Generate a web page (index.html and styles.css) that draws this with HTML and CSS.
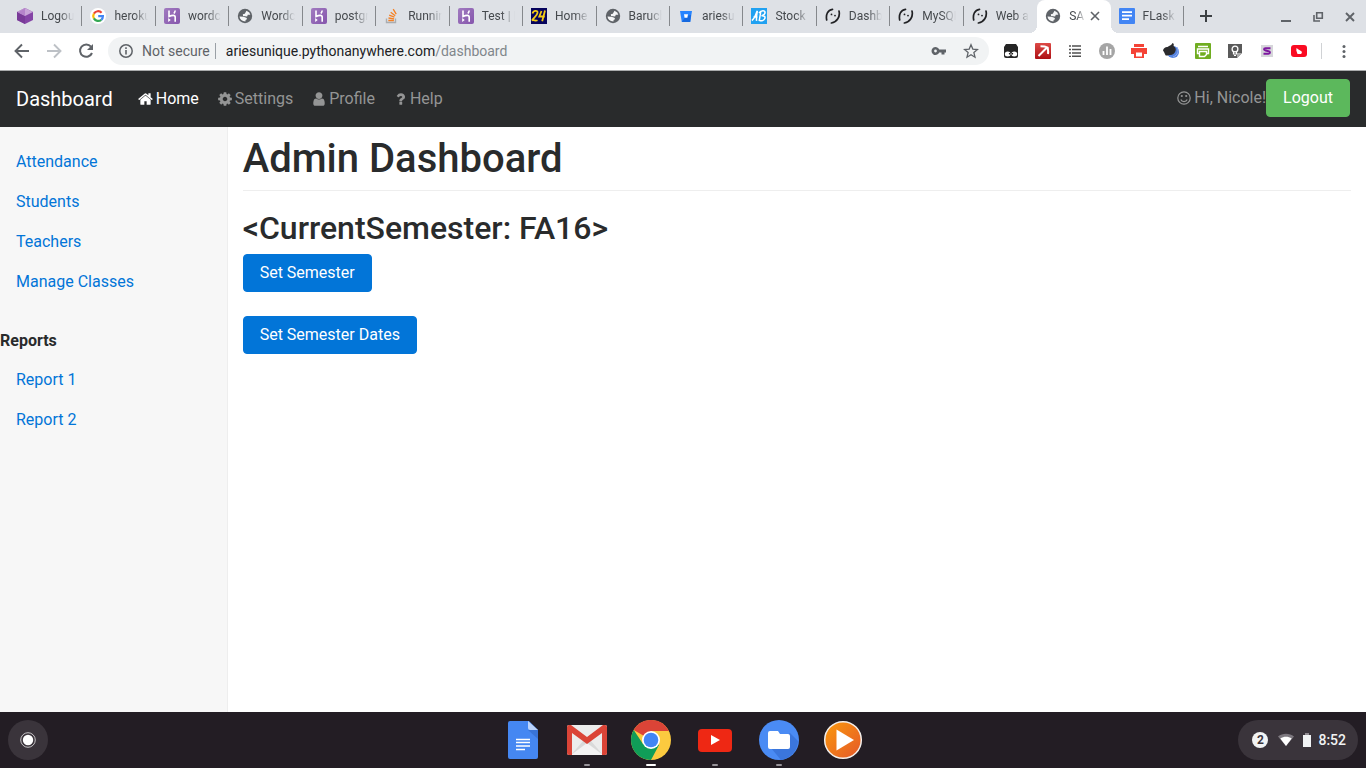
FILE: index.html
```html
<!DOCTYPE html>
<html lang="en">
<head>
<meta charset="utf-8">
<meta name="viewport" content="width=device-width, initial-scale=1">
<title>Admin Dashboard</title>
<link rel="stylesheet" href="styles.css">
</head>
<body>
<svg class="sprite" aria-hidden="true">
  <defs>
    <linearGradient id="heroku-fill" x1="0" y1="0" x2="1" y2="1"><stop offset="0" stop-color="#a17bc0"/><stop offset="1" stop-color="#8555ac"/></linearGradient>
    <linearGradient id="play-fill" x1="0" y1="0" x2="1" y2="1"><stop offset="0" stop-color="#fb9a0c"/><stop offset="1" stop-color="#e4572a"/></linearGradient>
    <linearGradient id="pick-fill" x1="0" y1="0" x2="0" y2="1"><stop offset="0" stop-color="#dd4a46"/><stop offset="1" stop-color="#ad1015"/></linearGradient>
  </defs>
  <symbol id="globe" viewBox="0 0 16 16"><circle cx="8" cy="8" r="7.200" fill="#5f6368"/><path d="M9.500 2.700L12.300 4.500l1 2.300-2.500-.1-.7 1.700-4-.5-.3-1.600 2-.5zM2.500 8.600l4 .2 2.800.9.900 1.300-1.600 1-.2 1.500C5 13.400 2.800 11.500 2.500 8.600z" fill="#f4f5f6"/></symbol>
  <symbol id="heroku" viewBox="0 0 16 16"><rect width="16" height="16" rx="2" fill="url(#heroku-fill)"/><path d="M5 2.500v6c1.500-.7 3-1.100 4.300-1.100 1.500 0 1.900.7 1.900 1.800v4.500M11.200 2.500c-.1 1-.5 2-1.300 3" fill="none" stroke="#fff" stroke-width="1.600"/><path d="M4.200 10l2.500 2-2.500 2z" fill="#fff"/></symbol>
  <symbol id="whiskers" viewBox="0 0 16 16"><path d="M7.500 1.300C2.700 2 .6 6.500 1.700 12M14 3c1.400 5.600-2 11-7.600 12" fill="none" stroke="#202124" stroke-width="1.700" stroke-linecap="round"/><circle cx="6.500" cy="6.400" r=".9" fill="#202124"/><circle cx="10" cy="7.600" r=".9" fill="#202124"/></symbol>
  <symbol id="doc" viewBox="0 0 16 16"><rect width="16" height="16" rx="1" fill="#4285f4"/><path d="M3 4.200h10M3 7.700h10M3 11.200h7" stroke="#fff" stroke-width="1.700"/></symbol>
</svg>

<header class="browser">
  <div class="tabstrip">
    <div class="tabs" role="tablist" aria-label="Open tabs">
      <button class="tab" role="tab"><svg class="favicon" viewBox="0 0 16 16"><path d="M8 0l8 4v8l-8 4-8-4V4z" fill="#8544a6"/><path d="M8 0l8 4-8 4-8-4z" fill="#c9a4d8"/><path d="M0 4l8 4v8l-8-4z" fill="#793a98"/><path d="M8 0v8L1 4.500z" fill="#b583ca"/></svg><span class="tab-title">Logou</span></button>
      <button class="tab" role="tab"><svg class="favicon" viewBox="0 0 16 16"><circle cx="8" cy="8" r="8" fill="#fff"/><g fill="none" stroke-width="2.200"><path d="M3.900 5.600A4.900 4.900 0 0 1 11.600 4.700" stroke="#ea4335"/><path d="M3.900 5.600a4.900 4.900 0 0 0 0 4.900" stroke="#fbbc05"/><path d="M3.900 10.400a4.900 4.900 0 0 0 7.400 1.400" stroke="#34a853"/><path d="M11.300 11.800c1-.8 1.600-2.100 1.600-3.600H8.200" stroke="#4285f4"/></g></svg><span class="tab-title">heroku</span></button>
      <button class="tab" role="tab"><svg class="favicon"><use href="#heroku"/></svg><span class="tab-title">wordc</span></button>
      <button class="tab" role="tab"><svg class="favicon"><use href="#globe"/></svg><span class="tab-title">Wordc</span></button>
      <button class="tab" role="tab"><svg class="favicon"><use href="#heroku"/></svg><span class="tab-title">postgr</span></button>
      <button class="tab" role="tab"><svg class="favicon" viewBox="0 0 16 16"><path d="M2.500 10.500v4h9v-4" fill="none" stroke="#aaadb0" stroke-width="1.400"/><path d="M4.300 12.500h5.600M4.500 10l5.600.9M5.200 7.200l5.200 2M6.700 4.300l4.500 3.500M9.200 1.200l3 5" stroke="#f48024" stroke-width="1.300"/></svg><span class="tab-title">Runnin</span></button>
      <button class="tab" role="tab"><svg class="favicon"><use href="#heroku"/></svg><span class="tab-title">Test | H</span></button>
      <button class="tab" role="tab"><svg class="favicon" viewBox="0 0 16 16"><path d="M0 0h16v16H0z" fill="#06035c"/><path d="M1.500 5.500c.8-3.300 5.500-3.500 5-.7C6.100 7.500 3.200 9.500 1 12.500c1.700-1 3.500.8 5.500-.3M10.500 3L8.300 8.500h5.500M14 2.500l-2.800 10.700" fill="none" stroke="#f3cb16" stroke-width="1.800"/></svg><span class="tab-title">Home</span></button>
      <button class="tab" role="tab"><svg class="favicon"><use href="#globe"/></svg><span class="tab-title">Baruch</span></button>
      <button class="tab" role="tab"><svg class="favicon" viewBox="0 0 16 16"><path d="M2 3h12l-1.800 11H3.800z" fill="#2684ff"/><path d="M8 8l5-1-.8 7H3.800z" fill="#1669df"/><path d="M6 6.300h4l-.6 3.500H6.600z" fill="#fff"/></svg><span class="tab-title">ariesu</span></button>
      <button class="tab" role="tab"><svg class="favicon" viewBox="0 0 16 16"><path d="M0 0h16v16H0z" fill="#20a1f1"/><path d="M.8 12.500c3-1.500 4-7 5.500-9.500-.5 3-1.200 7-.7 9.800M2.500 9h4M9.800 3.500L8.200 13M8 5c2-3 6.500-3 6 0-.4 2-2 2.300-3.500 2.700 3-.2 4 1 3.300 2.800-.8 2-3.500 3-5.300 1.800" fill="none" stroke="#fff" stroke-width="1.500"/></svg><span class="tab-title">Stock</span></button>
      <button class="tab" role="tab"><svg class="favicon"><use href="#whiskers"/></svg><span class="tab-title">Dashb</span></button>
      <button class="tab" role="tab"><svg class="favicon"><use href="#whiskers"/></svg><span class="tab-title">MySQL</span></button>
      <button class="tab tab-before-active" role="tab"><svg class="favicon"><use href="#whiskers"/></svg><span class="tab-title">Web a</span></button>
      <button class="tab tab-active" role="tab" aria-selected="true"><svg class="favicon"><use href="#globe"/></svg><span class="tab-title">SA</span><svg class="tab-close" viewBox="0 0 10 10"><path d="M1 1l8 8M9 1L1 9" stroke="#5f6368" stroke-width="1.600"/></svg></button>
      <button class="tab" role="tab"><svg class="favicon"><use href="#doc"/></svg><span class="tab-title">FLask</span></button>
    </div>
    <button class="new-tab" aria-label="New tab"><svg width="12" height="12" viewBox="0 0 12 12"><path d="M6 0v12M0 6h12" stroke="#3c4043" stroke-width="2"/></svg></button>
    <div class="window-controls">
      <button aria-label="Minimize"><svg width="12" height="12" viewBox="0 0 12 12"><path d="M1 10h10" stroke="#5f6368" stroke-width="2"/></svg></button>
      <button aria-label="Restore"><svg width="12" height="12" viewBox="0 0 12 12"><path d="M4.700 1.700h5.600v5.600H4.700zM2 4v6h6" fill="none" stroke="#5f6368" stroke-width="1.600"/></svg></button>
      <button aria-label="Close"><svg width="12" height="12" viewBox="0 0 12 12"><path d="M2 2l8 8M10 2l-8 8" stroke="#5f6368" stroke-width="1.900"/></svg></button>
    </div>
  </div>

  <div class="toolbar">
    <div class="history">
      <button aria-label="Back"><svg width="16" height="16" viewBox="0 0 16 16"><path d="M15 8H2M8 1.500L1.500 8 8 14.500" fill="none" stroke="#5f6368" stroke-width="1.900"/></svg></button>
      <button aria-label="Forward"><svg width="16" height="16" viewBox="0 0 16 16"><path d="M1 8h13M8 1.500L14.500 8 8 14.500" fill="none" stroke="#bdc1c6" stroke-width="1.900"/></svg></button>
      <button aria-label="Reload"><svg width="16" height="16" viewBox="0 0 16 16"><path d="M13 3.600A6.200 6.200 0 1 0 14 10" fill="none" stroke="#5f6368" stroke-width="2"/><path d="M15 1v6H9z" fill="#5f6368"/></svg></button>
    </div>
    <div class="address-bar">
      <svg width="14" height="14" viewBox="0 0 14 14"><circle cx="7" cy="7" r="6.200" fill="none" stroke="#5f6368" stroke-width="1.500"/><path d="M7 6v4.500M7 3.300v1.600" stroke="#5f6368" stroke-width="1.600"/></svg>
      <span class="security">Not secure</span>
      <div class="url" role="textbox" aria-label="Address" contenteditable="true" spellcheck="false">ariesunique.pythonanywhere.com<span class="url-path">/dashboard</span></div>
      <button aria-label="Saved passwords"><svg width="16" height="16" viewBox="0 0 16 16"><path d="M8.200 6.500H15v3h-1.500v2h-3v-2H8.200a4 4 0 1 1 0-3zM4.500 6.600a1.400 1.400 0 1 0 0 2.800 1.400 1.400 0 0 0 0-2.800z" fill="#5f6368" fill-rule="evenodd"/></svg></button>
      <button aria-label="Bookmark this page"><svg width="16" height="16" viewBox="0 0 16 16"><path d="M8 1.800l1.800 4.300 4.700.4-3.600 3.100 1.100 4.600L8 11.800l-4 2.400 1.100-4.600-3.600-3.100 4.700-.4z" fill="none" stroke="#5f6368" stroke-width="1.300"/></svg></button>
    </div>
    <div class="extensions">
      <button aria-label="Panda extension"><svg width="16" height="16" viewBox="0 0 16 16"><path d="M3 1h10l2 3v9q0 2-2 2H3q-2 0-2-2V4z" fill="#252525"/><ellipse cx="4.700" cy="11" rx="2.900" ry="2.500" fill="#fff"/><ellipse cx="11.300" cy="11" rx="2.900" ry="2.500" fill="#fff"/><circle cx="6.600" cy="10.700" r=".8"/><circle cx="9.400" cy="10.700" r=".8"/></svg></button>
      <button aria-label="Pickaxe extension"><svg width="16" height="16" viewBox="0 0 16 16"><rect width="16" height="16" rx="1" fill="url(#pick-fill)"/><path d="M3.500 13L12 4.500M5.500 3.300c3 0 6 .7 7.200 1.300.2 1.500.8 3.500.3 6.400" fill="none" stroke="#fff" stroke-width="2"/></svg></button>
      <button aria-label="List extension"><svg width="16" height="16" viewBox="0 0 16 16"><path d="M5 3h9M5 6.500h9M5 10h9M5 13.300h9" stroke="#505050" stroke-width="1.600"/><path d="M2 3h2M2 6.500h2M2 10h2M2 13.300h2" stroke="#505050" stroke-width="1.300"/></svg></button>
      <button aria-label="Statistics extension"><svg width="16" height="16" viewBox="0 0 16 16"><circle cx="8" cy="8" r="8" fill="#a5a5a5"/><path d="M4.500 8v4M8 3.500V12M11.500 6v6" stroke="#fff" stroke-width="1.800"/></svg></button>
      <button aria-label="Print extension"><svg width="16" height="16" viewBox="0 0 16 16"><path d="M3 1h10v3H3zM0 5h16v6h-3v4H3v-4H0z" fill="#f44336"/><path d="M5 9.500h6v4H5z" fill="#fff"/></svg></button>
      <button aria-label="Web extension"><svg width="16" height="16" viewBox="0 0 16 16"><circle cx="10" cy="9" r="6" fill="#5583df"/><path d="M0 7.500c.5-2.500 2.500-3.700 4.500-3.500C6.500 2.500 9 2 9.500 0c1.500.5 1.500 2 1 3 2 1 2.800 3 2 5-1 3-3.500 4.500-6 4-2 .5-3 1-4 .2L1 9z" fill="#2b2b2d"/><path d="M14 4c2 4 1 8-4 10" stroke="#91adf0" fill="none"/></svg></button>
      <button aria-label="Print friendly extension"><svg width="16" height="16" viewBox="0 0 16 16"><rect width="16" height="16" rx="1" fill="#70ad21"/><path d="M3 3.500h10" stroke="#fff" stroke-width="1.500"/><path d="M4 10.500H2.500V6h11v4.500H12M4.500 8.500h7v3l-2 2h-5z" fill="none" stroke="#fff" stroke-width="1.400"/></svg></button>
      <button aria-label="Keep extension"><svg width="16" height="16" viewBox="0 0 16 16"><path d="M1 1h14v9l-5 5H1z" fill="#5a5a5a"/><path d="M10 15v-5h5z" fill="#aaa"/><circle cx="8" cy="6" r="2.900" fill="none" stroke="#fff" stroke-width="1.300"/><path d="M6.500 9v2h3V9M7 12.500h2" fill="none" stroke="#fff" stroke-width="1.200"/></svg></button>
      <button aria-label="Script extension"><svg width="16" height="16" viewBox="0 0 16 16"><path d="M2 2h12v12H2z" fill="#d6d6da"/><path d="M11.500 5.300h-5q-1.500 0-1.500 1 0 .9 1.500 1.200l3 .7q1.500.4 1.500 1.300 0 1.200-1.500 1.200h-5" fill="none" stroke="#7d199f" stroke-width="1.900"/></svg></button>
      <button aria-label="Video extension"><svg width="16" height="16" viewBox="0 0 16 16"><rect y="2" width="16" height="12" rx="3" fill="#fa0b22"/><path d="M5.500 5l2 1.500L10 8l1 1-.8 2H6.500L5.300 7.500z" fill="#fff"/></svg></button>
    </div>
    <button class="browser-menu" aria-label="Browser menu"><svg width="4" height="16" viewBox="0 0 4 16"><g fill="#5f6368"><circle cx="2" cy="3.500" r="1.500"/><circle cx="2" cy="8.500" r="1.500"/><circle cx="2" cy="13.500" r="1.500"/></g></svg></button>
  </div>
</header>

<nav class="navbar" aria-label="Main">
  <a class="brand" href="#">Dashboard</a>
  <a class="nav-item nav-current" href="#"><svg width="15" height="16" viewBox="64 0 1664 1792"><path d="M1472 992v480q0 26-19 45t-45 19h-384v-384h-256v384h-384q-26 0-45-19t-19-45v-480q0-1 .5-3t.5-3l575-474 575 474q1 2 1 6zm223-69l-62 74q-8 9-21 11h-3q-13 0-21-7l-692-577-692 577q-12 8-24 7-13-2-21-11l-62-74q-8-10-7-23.500t11-21.500l719-599q32-26 76-26t76 26l244 204v-195q0-14 9-23t23-9h192q14 0 23 9t9 23v408l219 182q10 8 11 21.500t-7 23.500z"/></svg>Home</a>
  <a class="nav-item" href="#"><svg width="14" height="16" viewBox="128 0 1536 1792"><path d="M1152 896q0-106-75-181t-181-75-181 75-75 181 75 181 181 75 181-75 75-181zm512-109v222q0 12-8 23t-20 13l-185 28q-19 54-39 91 35 50 107 138 10 12 10 25t-9 23q-27 37-99 108t-94 71q-12 0-26-9l-138-108q-44 23-91 38-16 136-29 186-7 28-36 28h-222q-14 0-24.500-8.500t-11.500-21.500l-28-184q-49-16-90-37l-141 107q-10 9-25 9-14 0-25-11-126-114-165-168-7-10-7-23 0-12 8-23 15-21 51-66.500t54-70.500q-27-50-41-99l-183-27q-13-2-21-12.500t-8-23.500v-222q0-12 8-23t19-13l186-28q14-46 39-92-40-57-107-138-10-12-10-24 0-10 9-23 26-36 98.500-107.500t94.500-71.500q13 0 26 10l138 107q44-23 91-38 16-136 29-186 7-28 36-28h222q14 0 24.500 8.500t11.500 21.500l28 184q49 16 90 37l142-107q9-9 24-9 13 0 25 10 129 119 165 170 7 8 7 22 0 12-8 23-15 21-51 66.500t-54 70.500q26 50 41 98l183 28q13 2 21 12.500t8 23.500z"/></svg>Settings</a>
  <a class="nav-item" href="#"><svg width="14" height="16" viewBox="192 0 1408 1792"><path d="M1536 1399q0 109-62.500 187t-150.500 78h-854q-88 0-150.500-78t-62.500-187q0-85 8.500-160.500t31.500-152 58.500-131 94-89 134.500-34.500q131 128 313 128t313-128q76 0 134.500 34.500t94 89 58.500 131 31.500 152 8.500 160.500zm-256-887q0 159-112.500 271.500t-271.500 112.500-271.500-112.500-112.500-271.500 112.500-271.500 271.500-112.500 271.500 112.500 112.500 271.500z"/></svg>Profile</a>
  <a class="nav-item" href="#"><svg width="13" height="16" viewBox="224 0 1344 1792"><path d="M1088 1256v240q0 16-12 28t-28 12h-240q-16 0-28-12t-12-28v-240q0-16 12-28t28-12h240q16 0 28 12t12 28zm316-600q0 54-15.500 101t-35 76.500-55 59.500-57.500 43.500-61 35.500q-41 23-68.500 65t-27.500 67q0 17-12 32.500t-28 15.500h-240q-15 0-25.500-18.500t-10.500-37.500v-45q0-83 65-156.500t143-108.500q59-27 84-56t25-76q0-42-46.500-74t-107.500-32q-65 0-108 29-35 25-107 115-13 16-31 16-12 0-25-8l-164-125q-13-10-15.500-25t5.500-28q160-266 464-266 80 0 161 31t146 83 106 127.500 41 158.500z"/></svg>Help</a>
  <div class="account">
    <span class="greeting"><svg width="14" height="16" viewBox="0 0 14 16"><g fill="none" stroke="currentColor" stroke-width="1.200"><circle cx="7" cy="8" r="6.200"/><path d="M3.800 9.500c1 2.700 5.400 2.700 6.400 0"/></g><circle cx="4.800" cy="6" r="1.100"/><circle cx="9.200" cy="6" r="1.100"/></svg>Hi, Nicole!</span>
    <a class="btn btn-success" href="#">Logout</a>
  </div>
</nav>

<div class="page">
  <aside class="sidebar">
    <nav class="side-links" aria-label="Sections">
      <a href="#">Attendance</a>
      <a href="#">Students</a>
      <a href="#">Teachers</a>
      <a href="#">Manage Classes</a>
    </nav>
    <h2 class="side-heading">Reports</h2>
    <nav class="side-links" aria-label="Reports">
      <a href="#">Report 1</a>
      <a href="#">Report 2</a>
    </nav>
  </aside>
  <main class="content">
    <h1>Admin Dashboard</h1>
    <h2>&lt;CurrentSemester: FA16&gt;</h2>
    <div class="actions">
      <button class="btn btn-primary">Set Semester</button>
      <button class="btn btn-primary">Set Semester Dates</button>
    </div>
  </main>
</div>

<footer class="shelf">
  <button class="launcher" aria-label="Launcher"><svg width="16" height="16" viewBox="0 0 16 16"><circle cx="8" cy="8" r="7.300" fill="none" stroke="#c5c2c5"/><circle cx="8" cy="8" r="5.200" fill="#fff"/></svg></button>
  <div class="apps">
    <button class="app" aria-label="Docs"><svg viewBox="0 0 40 40"><path d="M7 1h19l9 9v27q0 2-2 2H7q-2 0-2-2V3q0-2 2-2z" fill="#4587f2"/><path d="M25 10l10 0v9z" fill="#3974d8"/><path d="M25 1l10 9h-8q-2 0-2-2z" fill="#bbd3fb"/><path d="M13 19.500h14M13 22.500h14M13 26h14M13 29.500h9" stroke="#fff" stroke-width="1.300"/></svg></button>
    <button class="app running" aria-label="Gmail"><svg viewBox="0 0 40 40"><rect y="5" width="40" height="30" rx="2" fill="#ececec"/><path d="M4 35l12-14h8l12 14z" fill="#d9d9d9"/><path d="M4 35l16-12 16 12z" fill="#f3f3f3"/><path d="M0 7q0-2 2-2h2l16 12L36 5h2q2 0 2 2v26q0 2-2 2h-3V13L20 24 5 13v22H2q-2 0-2-2z" fill="#db4437"/></svg></button>
    <button class="app running focused" aria-label="Chrome"><svg viewBox="0 0 40 40"><circle cx="20" cy="20" r="20" fill="#fcca3f"/><path d="M20 20L2.700 10A20 20 0 0 1 37.900 11H20z" fill="#db4437"/><path d="M2.700 10A20 20 0 0 0 20 40L28 25 20 20l-8 4z" fill="#109d58"/><circle cx="20" cy="20" r="9" fill="#fff"/><circle cx="20" cy="20" r="7.300" fill="#4285f4"/></svg></button>
    <button class="app running" aria-label="YouTube"><svg viewBox="0 0 40 40"><rect x="3" y="9" width="34" height="23" rx="4" fill="#ee2814"/><path d="M16 15l9 5-9 5z" fill="#fff"/></svg></button>
    <button class="app running" aria-label="Files"><svg viewBox="0 0 40 40"><circle cx="20" cy="20" r="20" fill="#4a8bf4"/><path d="M12 28l19-15 8 8a20 20 0 0 1-17 19z" fill="#3b76dc"/><path d="M11 11h8l2 3h8q2 0 2 2v11q0 2-2 2H11q-2 0-2-2V13q0-2 2-2z" fill="#fff"/></svg></button>
    <button class="app" aria-label="Play Music"><svg viewBox="0 0 40 40"><circle cx="20" cy="20" r="18.300" fill="url(#play-fill)" stroke="#f3eeea" stroke-width="1.500"/><path d="M13.500 9.500L31 20 13.500 30.500z" fill="#fff"/></svg></button>
  </div>
  <button class="status" aria-label="Status area">
    <span class="count">2</span>
    <svg width="16" height="16" viewBox="0 0 16 16"><path d="M0 4.500C4.500.8 11.500.8 16 4.500L8 14z" fill="#7d787f"/><path d="M2.300 6.400c3.400-2.200 8-2.200 11.400 0L8 14z" fill="#fff"/></svg>
    <svg width="8" height="16" viewBox="0 0 8 16"><path d="M2 1h4v2H2z" fill="#8f8a90"/><path d="M0 3h8v12H0z" fill="#f1f3f4"/></svg>
    <span class="clock">8:52</span>
  </button>
</footer>
</body>
</html>
```
FILE: styles.css
```css
*, *::before, *::after { box-sizing: border-box; }

body {
  display: flex;
  flex-direction: column;
  min-height: 100vh;
  margin: 0;
  background: #fff;
  color: #292b2c;
  font-family: Roboto, "Liberation Sans", sans-serif;
  font-size: 16px;
  line-height: 24px;
}

button { margin: 0; padding: 0; border: 0; background: none; color: inherit; font: inherit; cursor: pointer; }
a { color: #0275d8; text-decoration: none; }
svg { display: block; flex: none; }
.sprite { position: absolute; width: 0; height: 0; }

/* Browser window */
.browser { border-bottom: 1px solid #a9abac; }
.tabstrip { display: flex; height: 33px; padding-left: 9px; background: #dee1e6; }
.tabs { display: grid; grid-auto-columns: minmax(0, 1fr); grid-auto-flow: column; flex: 1; min-width: 0; }
.tab {
  position: relative;
  display: flex;
  align-items: center;
  gap: 8px;
  min-width: 0;
  padding: 0 8px 2px;
  color: #45494d;
  font-size: 12px;
  line-height: 16px;
  text-align: left;
}
.tab::after { content: ""; position: absolute; top: 6px; right: 0; width: 1px; height: 20px; background: #85888c; }
.tab-active::after, .tab-before-active::after { display: none; }
.favicon { width: 16px; height: 16px; }
.tab-title {
  flex: 1;
  min-width: 0;
  overflow: hidden;
  white-space: nowrap;
  -webkit-mask-image: linear-gradient(to left, transparent, #000 14px);
  mask-image: linear-gradient(to left, transparent, #000 14px);
}
.tab-active { border-radius: 8px 8px 0 0; background: #fff; padding-right: 11px; }
.tab-active .tab-title {
  margin-right: -4px;
  -webkit-mask-image: linear-gradient(to left, transparent, #000 10px);
  mask-image: linear-gradient(to left, transparent, #000 10px);
}
.tab-active::before {
  content: "";
  position: absolute;
  bottom: 0;
  left: -8px;
  right: -8px;
  height: 8px;
  background:
    radial-gradient(circle at 0 0, transparent 8px, #fff 8px) left / 8px 8px no-repeat,
    radial-gradient(circle at 100% 0, transparent 8px, #fff 8px) right / 8px 8px no-repeat;
}
.tab-close { width: 10px; height: 10px; }
.new-tab { display: grid; place-items: center; width: 44px; padding-bottom: 1px; }
.window-controls { display: flex; gap: 20px; padding: 0 10px 0 52px; }

.toolbar { display: flex; align-items: center; height: 37px; padding: 0 20px 1px 0; background: #fff; }
.history { display: flex; gap: 16px; padding: 0 14px; }
.address-bar {
  display: flex;
  flex: 1;
  align-items: center;
  min-width: 0;
  height: 28px;
  padding: 0 10px 0 11px;
  border-radius: 14px;
  background: #f1f3f4;
  font-size: 14px;
  line-height: 16px;
}
.security { margin-left: 9px; padding-right: 5px; border-right: 1px solid #9aa0a6; color: #5f6368; }
.url { flex: 1; min-width: 0; margin-left: 10px; overflow: hidden; color: #202124; white-space: nowrap; outline: none; }
.url-path { color: #80868b; }
.address-bar button + button { margin-left: 16px; }
.extensions { display: flex; gap: 16px; margin-left: 14px; padding-right: 14px; border-right: 1px solid #d0d2d5; }
.browser-menu { margin-left: 20px; }

/* Site navigation */
.navbar { display: flex; align-items: center; gap: 19px; min-height: 56px; padding: 8px 16px; background: #292b2c; }
.brand { margin-right: 6px; color: #fff; font-size: 20px; }
.nav-item, .greeting { display: flex; align-items: center; gap: 3px; color: #949595; }
.nav-item svg, .greeting svg { fill: currentColor; }
.nav-current { color: #fff; }
.account { display: flex; align-items: center; align-self: flex-start; margin-left: auto; }

.btn { padding: 6px 16px; border: 1px solid; border-radius: 4px; color: #fff; line-height: 24px; }
.btn-success { border-color: #5cb85c; background: #5cb85c; }
.btn-primary { border-color: #0275d8; background: #0275d8; }

/* Page */
.page { display: grid; grid-template-columns: 1fr 5fr; flex: 1; }
.sidebar { padding-top: 15px; border-right: 1px solid #eee; background: #f7f7f7; }
.side-links { display: flex; flex-direction: column; }
.side-links a { padding: 8px 16px; }
.side-heading { margin: 27px 0 7px; font-size: 16px; font-weight: 700; line-height: 24px; }
.content { padding: 10px 15px; }
.content h1 {
  margin: 0 0 20px;
  padding-bottom: 9px;
  border-bottom: 1px solid #eee;
  font-size: 40px;
  font-weight: 500;
  line-height: 44px;
}
.content h2 { margin: 0 0 8px; font-size: 32px; font-weight: 500; line-height: 35px; }
.actions { display: flex; flex-direction: column; align-items: flex-start; gap: 24px; }

/* Desktop shelf */
.shelf { display: grid; grid-template-columns: 1fr auto 1fr; align-items: center; height: 56px; padding: 0 8px; background: #231d24; }
.launcher { display: grid; place-items: center; width: 40px; height: 40px; border-radius: 50%; background: #3a343b; }
.apps { display: flex; gap: 24px; }
.app { position: relative; width: 40px; height: 40px; }
.running::after { content: ""; position: absolute; bottom: -6px; left: 17px; width: 6px; height: 2px; border-radius: 1px; background: #98949a; }
.focused::after { left: 15px; width: 10px; background: #fff; }
.status {
  display: flex;
  justify-self: end;
  align-items: center;
  height: 40px;
  padding: 0 12px 0 14px;
  border-radius: 20px;
  background: #3a343b;
  color: #f1f3f4;
  font-size: 14px;
  font-weight: 500;
}
.count { width: 16px; margin-right: 10px; border-radius: 50%; background: #f1f3f4; color: #3a343b; font-size: 12px; font-weight: 700; line-height: 16px; text-align: center; }
.status svg + svg { margin-left: 9px; }
.clock { margin-left: 7px; }
```
